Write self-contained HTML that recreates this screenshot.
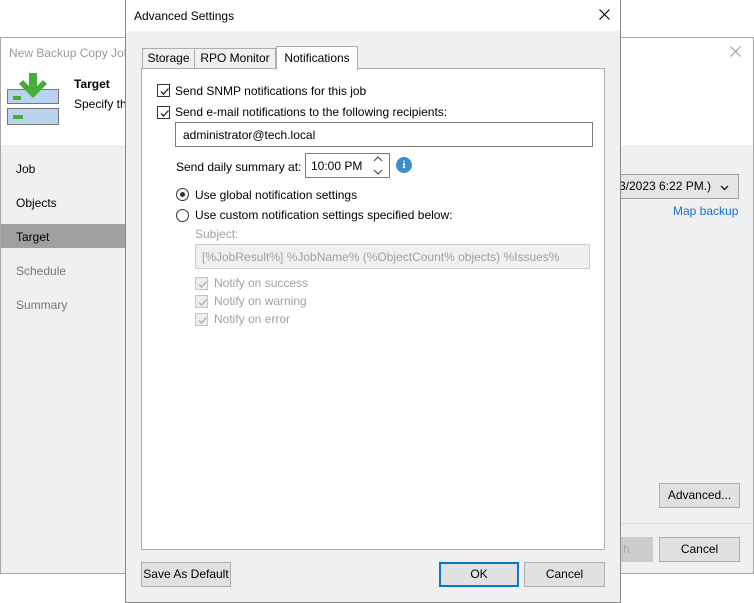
<!DOCTYPE html>
<html><head><style>
*{box-sizing:border-box;margin:0;padding:0}
body{width:754px;height:603px;background:#fff;font-family:"Liberation Sans",sans-serif;font-size:12px;color:#000;position:relative;overflow:hidden}
.a{position:absolute}
.btn{position:absolute;background:#e1e1e1;border:1px solid #adadad;text-align:center;font-size:12px;line-height:22px}
.cb{position:absolute;width:13px;height:13px;border:1px solid #333;background:#fff}
.cb svg{position:absolute;left:1px;top:1px}
.dis{color:#a0a0a0}
.cbd{border-color:#c4c4c4;background:#eee}
</style></head><body>
<!-- back window -->
<div class="a" style="left:0;top:37px;width:754px;height:537px;border:1px solid #a8a8a8;background:#f0f0f0"></div>
<div class="a" style="left:1px;top:38px;width:752px;height:107px;background:#fff"></div>
<div class="a" style="left:9px;top:46px;color:#999;font-size:12px">New Backup Copy Job</div>
<svg class="a" style="left:730px;top:46px" width="11" height="11"><path d="M0.5 0.5l10 10M10.5 0.5l-10 10" stroke="#999" stroke-width="1"/></svg>
<div class="a" style="left:7px;top:89px;width:52px;height:15px;background:#b9d3ee;border:1px solid #777"></div>
<div class="a" style="left:13px;top:96px;width:8px;height:4px;background:#44b035"></div>
<div class="a" style="left:7px;top:108px;width:52px;height:17px;background:#b9d3ee;border:1px solid #777"></div>
<div class="a" style="left:13px;top:115px;width:10px;height:4px;background:#44b035"></div>
<svg class="a" style="left:18px;top:73px" width="30" height="32"><path d="M11 0h8v13l6-6 4 4L15 25 1 11l4-4 6 6z" fill="#44b035"/></svg>
<div class="a" style="left:74px;top:77px;font-weight:bold">Target</div>
<div class="a" style="left:74px;top:97px">Specify th</div>
<div class="a" style="left:16px;top:162px">Job</div>
<div class="a" style="left:16px;top:196px">Objects</div>
<div class="a" style="left:1px;top:224px;width:124px;height:24px;background:#a0a0a0"></div>
<div class="a" style="left:16px;top:230px">Target</div>
<div class="a" style="left:16px;top:264px;color:#777">Schedule</div>
<div class="a" style="left:16px;top:298px;color:#777">Summary</div>
<div class="a" style="left:600px;top:174px;width:139px;height:25px;border:1px solid #a0a0a0;background:#e5e5e5;line-height:23px;padding-left:18px">3/2023 6:22 PM.)<svg style="position:absolute;right:9px;top:10px" width="9" height="6"><path d="M1 1l3.5 3.5L8 1" stroke="#222" stroke-width="1.4" fill="none"/></svg></div>
<div class="a" style="left:673px;top:204px;color:#1a6fd0">Map backup</div>
<div class="btn" style="left:659px;top:483px;width:81px;height:25px">Advanced...</div>
<div class="a" style="left:620px;top:523px;width:133px;height:1px;background:#ddd"></div>
<div class="btn" style="left:600px;top:537px;width:53px;height:25px;background:#ccc;border-color:#ccc;color:#aaa">h</div>
<div class="btn" style="left:659px;top:537px;width:81px;height:25px">Cancel</div>
<!-- dialog -->
<div class="a" style="left:125px;top:0;width:496px;height:603px;border:1px solid #888;background:#f0f0f0"></div>
<div class="a" style="left:126px;top:0;width:494px;height:31px;background:#fff"></div>
<div class="a" style="left:134px;top:9px">Advanced Settings</div>
<svg class="a" style="left:599px;top:9px" width="11" height="11"><path d="M0.5 0.5l10 10M10.5 0.5l-10 10" stroke="#000" stroke-width="1.1"/></svg>
<div class="a" style="left:141px;top:68px;width:464px;height:482px;background:#fff;border:1px solid #adadad"></div>
<div class="a" style="left:142px;top:48px;width:53px;height:21px;border:1px solid #adadad;background:#f0f0f0;text-align:center;line-height:19px">Storage</div>
<div class="a" style="left:194px;top:48px;width:82px;height:21px;border:1px solid #adadad;background:#f0f0f0;text-align:center;line-height:19px">RPO Monitor</div>
<div class="a" style="left:276px;top:46px;width:82px;height:24px;border:1px solid #adadad;border-bottom:none;background:#fff;text-align:center;line-height:22px">Notifications</div>
<div class="cb" style="left:157px;top:84px"><svg width="11" height="11"><path d="M2 5.5l2.5 2.5 5-5.5" stroke="#222" stroke-width="1.3" fill="none"/></svg></div>
<div class="a" style="left:175px;top:84px">Send SNMP notifications for this job</div>
<div class="cb" style="left:157px;top:106px"><svg width="11" height="11"><path d="M2 5.5l2.5 2.5 5-5.5" stroke="#222" stroke-width="1.3" fill="none"/></svg></div>
<div class="a" style="left:175px;top:105px">Send e-mail notifications to the following recipients:</div>
<div class="a" style="left:175px;top:122px;width:418px;height:25px;border:1px solid #7a7a7a;padding:5px 7px">administrator@tech.local</div>
<div class="a" style="left:176px;top:160px">Send daily summary at:</div>
<div class="a" style="left:305px;top:153px;width:85px;height:25px;border:1px solid #7a7a7a;background:#fff;padding:5px 5px">10:00 PM</div>
<svg class="a" style="left:373px;top:156px" width="10" height="20"><path d="M1 5l4-4 4 4M1 14l4 4 4-4" stroke="#444" stroke-width="1.1" fill="none"/></svg>
<div class="a" style="left:396px;top:157px;width:16px;height:16px;border-radius:50%;background:#3d8ccc;color:#fff;font-weight:bold;font-size:11px;text-align:center;line-height:16px;font-family:'Liberation Serif',serif">i</div>
<div class="a" style="left:176px;top:188px;width:13px;height:13px;border:1px solid #333;border-radius:50%;background:#fff"><div class="a" style="left:3px;top:3px;width:5px;height:5px;border-radius:50%;background:#333"></div></div>
<div class="a" style="left:195px;top:188px">Use global notification settings</div>
<div class="a" style="left:176px;top:209px;width:13px;height:13px;border:1px solid #333;border-radius:50%;background:#fff"></div>
<div class="a" style="left:195px;top:208px">Use custom notification settings specified below:</div>
<div class="a dis" style="left:195px;top:227px">Subject:</div>
<div class="a dis" style="left:195px;top:244px;width:395px;height:25px;border:1px solid #ccc;background:#f0f0f0;padding:5px 6px">[%JobResult%] %JobName% (%ObjectCount% objects) %Issues%</div>
<div class="cb cbd" style="left:195px;top:277px"><svg width="11" height="11"><path d="M2 5.5l2.5 2.5 5-5.5" stroke="#aaa" stroke-width="1.3" fill="none"/></svg></div>
<div class="a dis" style="left:214px;top:276px">Notify on success</div>
<div class="cb cbd" style="left:195px;top:295px"><svg width="11" height="11"><path d="M2 5.5l2.5 2.5 5-5.5" stroke="#aaa" stroke-width="1.3" fill="none"/></svg></div>
<div class="a dis" style="left:214px;top:294px">Notify on warning</div>
<div class="cb cbd" style="left:195px;top:313px"><svg width="11" height="11"><path d="M2 5.5l2.5 2.5 5-5.5" stroke="#aaa" stroke-width="1.3" fill="none"/></svg></div>
<div class="a dis" style="left:214px;top:312px">Notify on error</div>
<div class="btn" style="left:141px;top:562px;width:90px;height:25px">Save As Default</div>
<div class="btn" style="left:439px;top:562px;width:80px;height:25px;border:2px solid #0a78c8;line-height:21px">OK</div>
<div class="btn" style="left:524px;top:562px;width:81px;height:25px">Cancel</div>
</body></html>
